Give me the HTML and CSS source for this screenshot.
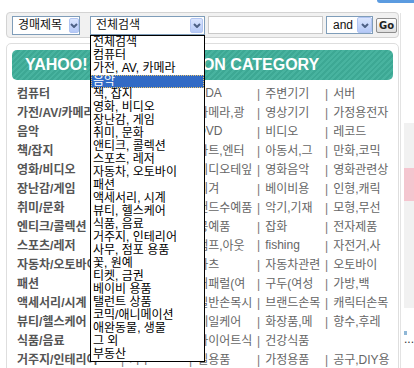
FILE: index.html
```html
<!DOCTYPE html>
<html lang="ko">
<head>
    <meta charset="UTF-8">
    <title>야후! 경매 카테고리</title>
    <link rel="stylesheet" href="styles.css">
</head>
<body>
    <div class="topbar"><span class="tab"></span></div>

    <div class="page">
        <div class="main">
            <!-- 검색 바 -->
            <form class="search">
                <div class="sel sel-field">
                    <span>경매제목</span>
                    <span class="arrow"><svg width="8" height="5" viewBox="0 0 8 5"><path d="M1 1 L4 4 L7 1" /></svg></span>
                </div>

                <div class="sel-wrap">
                    <div class="sel sel-cat">
                        <span>전체검색</span>
                        <span class="arrow"><svg width="8" height="5" viewBox="0 0 8 5"><path d="M1 1 L4 4 L7 1" /></svg></span>
                    </div>
                    <ul class="droplist">
                        <li>전체검색</li>
                        <li>컴퓨터</li>
                        <li>가전, AV, 카메라</li>
                        <li class="on">음악</li>
                        <li>책, 잡지</li>
                        <li>영화, 비디오</li>
                        <li>장난감, 게임</li>
                        <li>취미, 문화</li>
                        <li>앤티크, 콜렉션</li>
                        <li>스포츠, 레저</li>
                        <li>자동차, 오토바이</li>
                        <li>패션</li>
                        <li>액세서리, 시계</li>
                        <li>뷰티, 헬스케어</li>
                        <li>식품, 음료</li>
                        <li>거주지, 인테리어</li>
                        <li>사무, 점포 용품</li>
                        <li>꽃, 원예</li>
                        <li>티켓, 금권</li>
                        <li>베이비 용품</li>
                        <li>탤런트 상품</li>
                        <li>코믹/애니메이션</li>
                        <li>애완동물, 생물</li>
                        <li>그 외</li>
                        <li>부동산</li>
                    </ul>
                </div>

                <input type="text" class="kw" name="kw">

                <div class="sel sel-op">
                    <span>and</span>
                    <span class="arrow"><svg width="8" height="5" viewBox="0 0 8 5"><path d="M1 1 L4 4 L7 1" /></svg></span>
                </div>

                <button type="submit" class="go">Go</button>
            </form>

            <!-- 카테고리 목록 -->
            <div class="catbox">
                <div class="banner">YAHOO! KOREA AUCTION CATEGORY</div>

                <div class="cats">
                    <div class="row"><b>컴퓨터</b><span>노트북</span><span>PDA</span><span>주변기기</span><span>서버</span></div>
                    <div class="row"><b>가전/AV/카메라</b><span>생활가전</span><span>카메라,광</span><span>영상기기</span><span>가정용전자</span></div>
                    <div class="row"><b>음악</b><span>CD</span><span>DVD</span><span>비디오</span><span>레코드</span></div>
                    <div class="row"><b>책/잡지</b><span>잡지</span><span>아트,엔터</span><span>아동서,그</span><span>만화,코믹</span></div>
                    <div class="row"><b>영화/비디오</b><span>DVD</span><span>비디오테잎</span><span>영화음악</span><span>영화관련상</span></div>
                    <div class="row"><b>장난감/게임</b><span>게임</span><span>피겨</span><span>베이비용</span><span>인형,캐릭</span></div>
                    <div class="row"><b>취미/문화</b><span>수집품</span><span>핸드수예품</span><span>악기,기재</span><span>모형,무선</span></div>
                    <div class="row"><b>엔티크/콜렉션</b><span>미술품</span><span>공예품</span><span>잡화</span><span>전자제품</span></div>
                    <div class="row"><b>스포츠/레저</b><span>골프</span><span>캠프,아웃</span><span>fishing</span><span>자전거,사</span></div>
                    <div class="row"><b>자동차/오토바이</b><span>자동차</span><span>파츠</span><span>자동차관련</span><span>오토바이</span></div>
                    <div class="row"><b>패션</b><span>브랜드</span><span>어패럴(여</span><span>구두(여성</span><span>가방,백</span></div>
                    <div class="row"><b>액세서리/시계</b><span>주얼리</span><span>일반손목시</span><span>브랜드손목</span><span>캐릭터손목</span></div>
                    <div class="row"><b>뷰티/헬스케어</b><span>화장품</span><span>네일케어</span><span>화장품,메</span><span>향수,후레</span></div>
                    <div class="row"><b>식품/음료</b><span>음료</span><span>다이어트식</span><span>건강식품</span></div>
                    <div class="row"><b>거주지/인테리어</b><span>가구</span><span>실용품</span><span>가정용품</span><span>공구,DIY용</span></div>
                </div>
            </div>
        </div>

        <!-- 오른쪽 사이드 -->
        <div class="side">
            <div class="side-box"><div class="side-pink"></div></div>
            <div class="side-dot"></div>
            <div class="side-more">...</div>
        </div>
    </div>
</body>
</html>
```

FILE: styles.css
```css
body {
    margin: 0;
    width: 414px;
    height: 368px;
    overflow: hidden;
    background: #fff;
    color: #555;
    font-family: 'Liberation Sans', 'Noto Sans CJK KR', sans-serif;
    font-size: 12px;
}

.topbar {
    height: 3px;
    display: flex;
    justify-content: flex-end;
}

.topbar .tab {
    width: 37px;
    height: 3px;
    background: #5b9be0;
    border-radius: 0 0 0 4px;
}

.page {
    display: flex;
}

.main {
    width: 398px;
    margin-left: 6px;
}

/* Search bar */
.search {
    margin: 9px 0 0;
    height: 24px;
    border: 1px solid #d3d3d3;
    border-radius: 4px;
    background: #f1f1f1;
    display: flex;
    align-items: center;
    padding-left: 5px;
}

.sel {
    box-sizing: border-box;
    height: 19px;
    border: 1px solid #7f9db9;
    background: #fff;
    color: #111;
    display: flex;
    align-items: center;
    justify-content: space-between;
    padding-left: 5px;
    overflow: hidden;
    line-height: 17px;
}

.arrow {
    box-sizing: border-box;
    flex: none;
    width: 13px;
    height: 15px;
    margin-right: 1px;
    border: 1px solid #b2c5f2;
    border-radius: 2px;
    background: linear-gradient(#dbe6fe, #b5c9f7);
    display: flex;
    align-items: center;
    justify-content: center;
}

.arrow path {
    fill: none;
    stroke: #4d6185;
    stroke-width: 2;
}

.sel-field {
    width: 68px;
    margin-right: 10px;
}

.sel-field .arrow {
    width: 10px;
    margin-right: 0;
}

.sel-wrap {
    position: relative;
    margin-right: 3px;
}

.sel-cat {
    width: 115px;
}

.kw {
    box-sizing: border-box;
    width: 115px;
    height: 18px;
    margin: 0 3px 0 0;
    border: 1px solid #c9c9c9;
    background: #fff;
    padding: 0;
}

.sel-op {
    width: 47px;
    height: 18px;
    margin-right: 3px;
    padding-left: 6px;
}

.sel-op .arrow {
    width: 15px;
    height: 16px;
    margin-right: 0;
}

.go {
    box-sizing: border-box;
    width: 21px;
    height: 15px;
    padding: 0;
    border: 1px solid #8d8d8d;
    border-radius: 2px;
    background: linear-gradient(#fefefe, #dedede);
    color: #222;
    font-family: 'DejaVu Sans', sans-serif;
    font-weight: bold;
    font-size: 10px;
    line-height: 13px;
}

/* Open category dropdown */
.droplist {
    position: absolute;
    top: 100%;
    left: 0;
    z-index: 10;
    box-sizing: border-box;
    width: 115px;
    margin: 0;
    padding: 0;
    list-style: none;
    border: 1px solid #000;
    background: #fff;
    color: #000;
    font-size: 12px;
    line-height: 13px;
}

.droplist li {
    height: 13px;
    padding-left: 2px;
    white-space: nowrap;
}

.droplist li.on {
    background: #316ac5;
    color: #fff;
    outline: 1px dotted #e9c46e;
    outline-offset: -1px;
}

/* Category box */
.catbox {
    margin-top: 5px;
    height: 340px;
    border: 1px solid #dedede;
    border-radius: 5px;
    padding: 6px 5px 0;
}

.banner {
    height: 30px;
    border-radius: 5px;
    background: repeating-linear-gradient(135deg, #3da894 0 2px, #48b39f 2px 4px);
    color: #fff;
    font-weight: bold;
    font-size: 16px;
    line-height: 30px;
    padding-left: 13px;
    white-space: nowrap;
    overflow: hidden;
}

.cats {
    margin-top: 3px;
    padding-left: 5px;
}

.row {
    display: grid;
    grid-template-columns: 104px 68px 68px 68px 68px;
    height: 19px;
    align-items: center;
    white-space: nowrap;
}

.row b {
    color: #555;
}

.row span {
    overflow: hidden;
    color: #666;
}

.row span::before {
    content: '|';
    color: #777;
    margin-right: 5px;
}

/* Right side edge */
.side {
    flex: 1;
    margin: 10px 0 0 1px;
    border-left: 1px solid #e3e3e3;
    padding-left: 3px;
    height: 358px;
}

.side-box {
    margin-top: 110px;
    height: 185px;
    background: #f1f1f1;
    padding-top: 45px;
    box-sizing: border-box;
}

.side-pink {
    height: 33px;
    background: #f5c5cf;
}

.side-dot {
    width: 3px;
    height: 4px;
    margin-top: 23px;
    background: #8fb7d6;
}

.side-more {
    color: #333;
    line-height: 8px;
}
```
